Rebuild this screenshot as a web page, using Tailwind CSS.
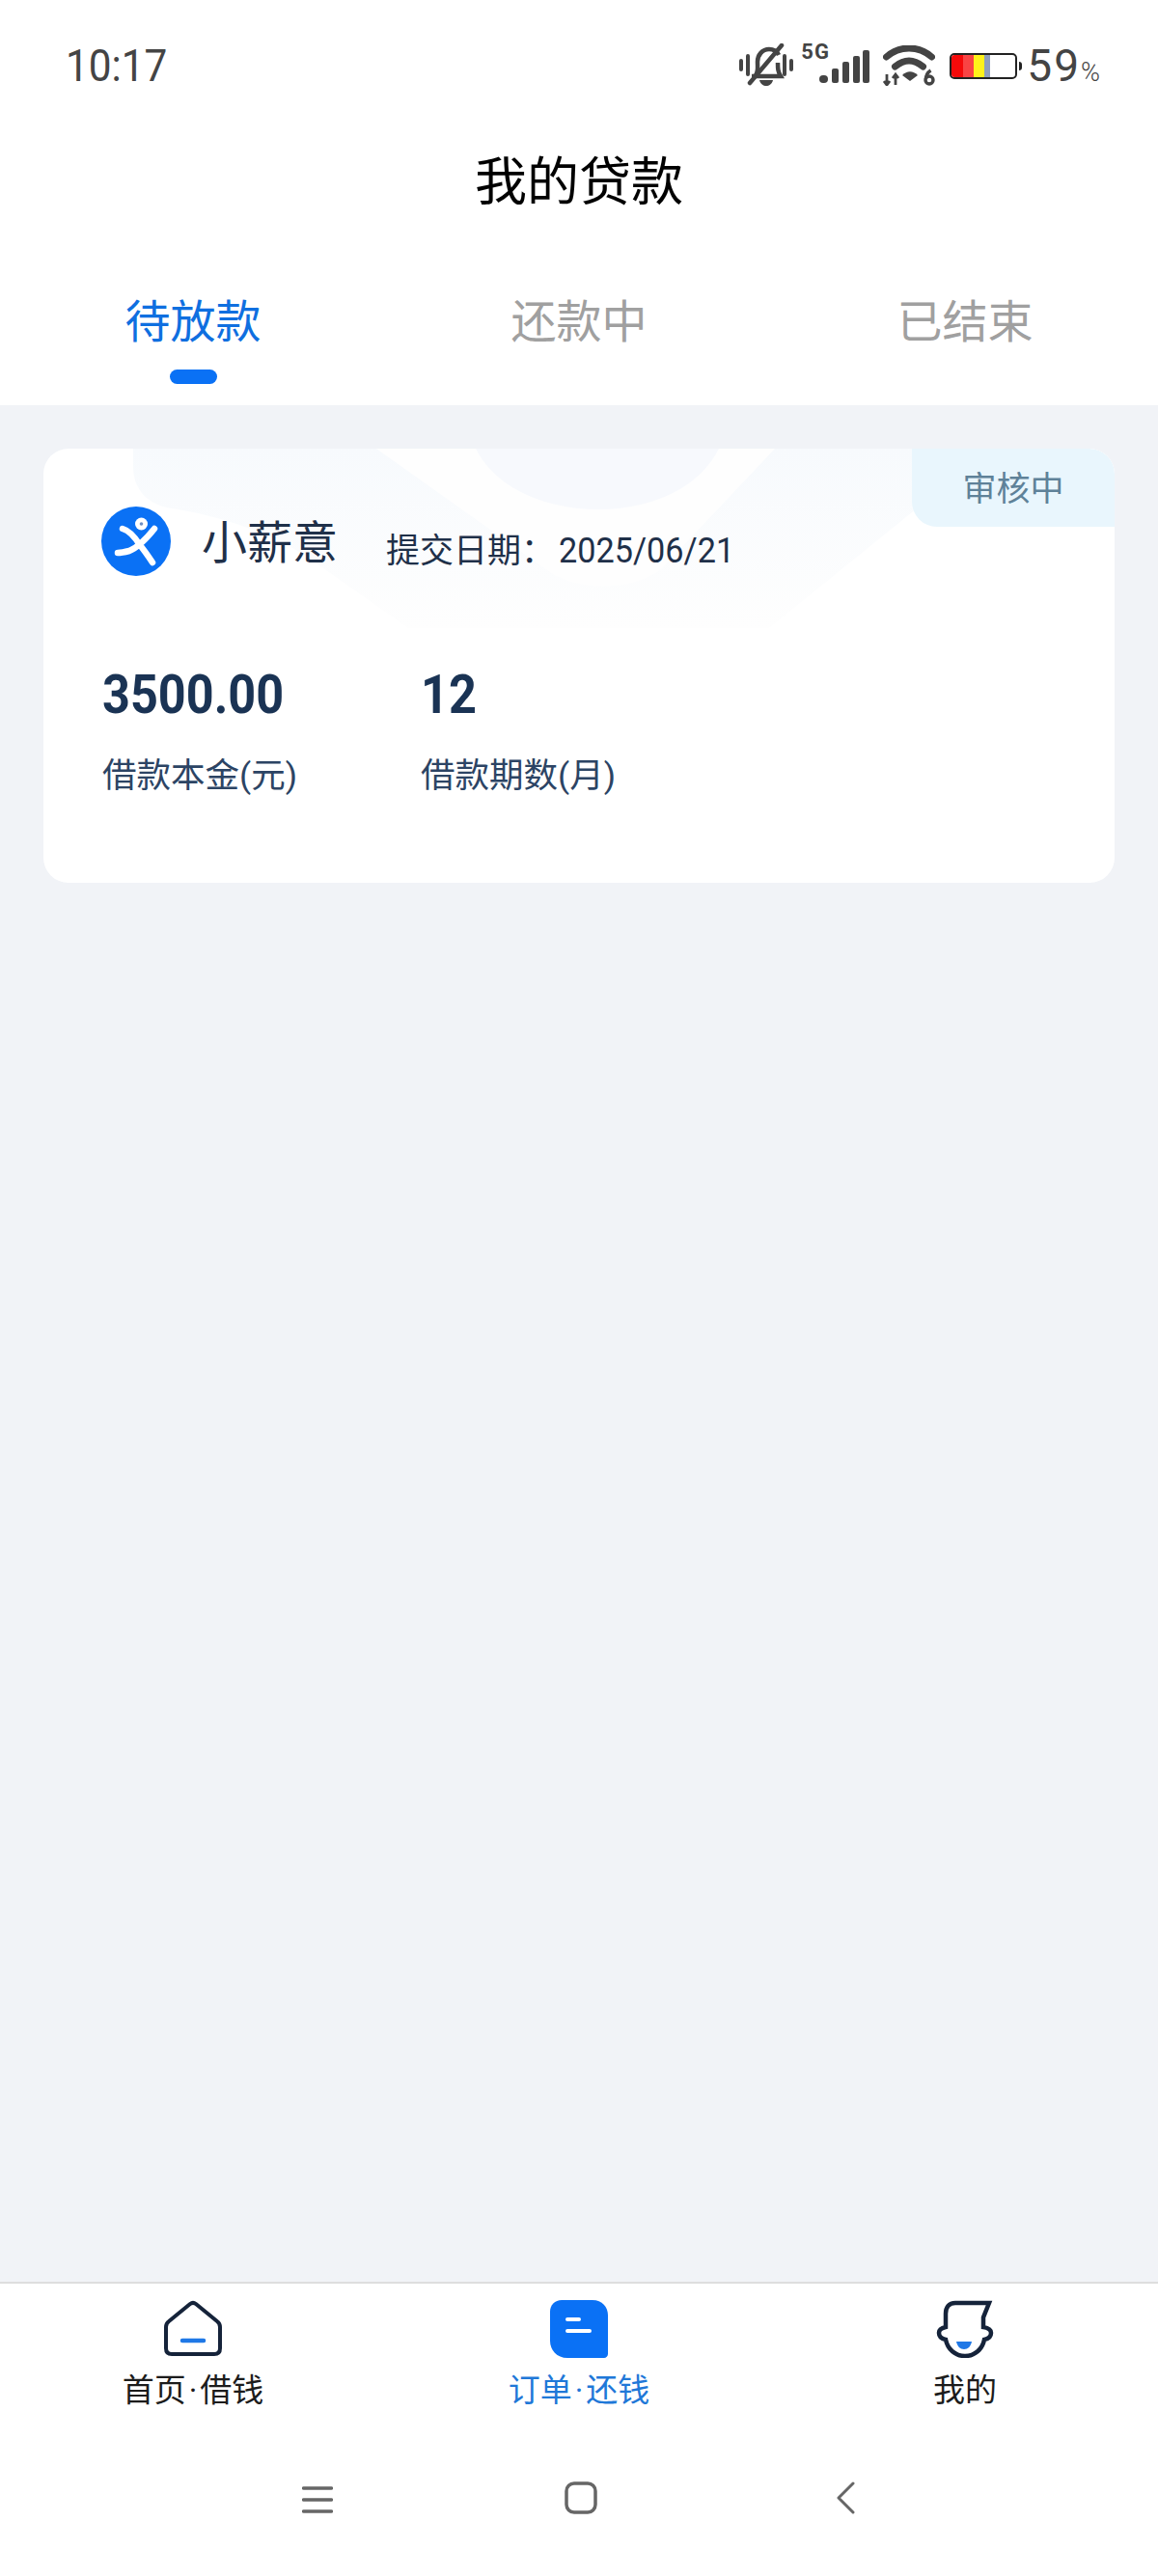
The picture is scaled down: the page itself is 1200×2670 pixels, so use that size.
<!DOCTYPE html>
<html lang="zh"><head><meta charset="utf-8"><script src="https://cdn.jsdelivr.net/npm/@tailwindcss/browser@4"></script></head>
<body class="m-0">
<div class="flex h-[2670px] w-[1200px] flex-col overflow-hidden bg-[#f1f3f7] font-['Roboto','Noto_Sans_CJK_SC',sans-serif]">
  <header class="h-[420px] shrink-0 bg-white">
    <div class="flex h-[136px] items-center justify-between pl-[68px] pr-[60px]">
      <span class="origin-left scale-x-[.92] text-[46px] leading-none text-[#444]">10:17</span>
      <div class="flex items-center">
        <svg width="56" height="46" viewBox="0 0 56 46" class="mr-[8px]" fill="none" stroke="#444">
          <path d="M2 18v9M9 13v19M47 13v19M54 18v9" stroke-width="4" stroke-linecap="round"/>
          <path d="M17 33c3-4 2-8 2-14 0-7 5-13 12-13 5 0 8 2 10 6M40 20c0 6 0 9 3 14H13" stroke-width="4.5"/>
          <path d="M11 41 L44 2" stroke-width="4.5" stroke-linecap="round"/>
          <path d="M21 38h14c-1 4-4 6-7 6s-6-2-7-6z" fill="#444" stroke="none"/>
        </svg>
        <div class="relative mr-[14px] h-[44px] w-[71px]">
          <span class="absolute left-0 top-[-3px] text-[22px] font-bold leading-[22px] tracking-[1px] text-[#444]">5G</span>
          <svg width="52" height="34" viewBox="0 0 52 34" class="absolute bottom-[4px] right-0" fill="#444">
            <rect x="0" y="26" width="9" height="8" rx="4"/><rect x="13" y="19" width="7" height="15" rx="2"/><rect x="24" y="12" width="7" height="22" rx="2"/><rect x="35" y="6" width="7" height="28" rx="2"/><rect x="45" y="0" width="7" height="34" rx="2"/>
          </svg>
        </div>
        <svg width="54" height="42" viewBox="0 0 54 42" class="mr-[15px]" fill="none">
          <path d="M3.500 12C17 0 37 0 50.500 12M12.500 22c10-8 19-8 29 0" stroke="#444" stroke-width="7" stroke-linecap="round"/>
          <path d="M20 31c5-5 11-5 16 0l-8 6z" fill="#444"/>
          <path d="M4 30v11M1 37l3 4 3-4M13 41V30M10 34l3-4 3 4" stroke="#444" stroke-width="2.800"/>
          <circle cx="48" cy="36" r="4" stroke="#444" stroke-width="3.400"/><path d="M44.500 35c0-5 2-7 5-9" stroke="#444" stroke-width="3.400"/>
        </svg>
        <div class="relative mr-[2px] flex h-[27px] w-[70px] overflow-hidden rounded-[5px] border-2 border-[#222] bg-white">
          <div class="w-[12px] bg-[#f50a0a]"></div><div class="w-[11px] bg-[#f94444]"></div><div class="w-[11px] bg-[#fff21a]"></div><div class="w-[6px] bg-[#8f9fbd]"></div>
        </div>
        <div class="mr-[5px] h-[9px] w-[3px] rounded-r-sm bg-[#222]"></div>
        <span class="text-[46px] leading-none tracking-[2px] text-[#444]">59</span><span class="mt-[14px] text-[27px] font-light leading-none text-[#444]">%</span>
      </div>
    </div>
    <h1 class="h-[102px] pt-[3px] text-center text-[54px] font-normal leading-[102px] text-black">我的贷款</h1>
    <nav class="grid grid-cols-3 pt-[68px]">
      <div class="flex flex-col items-center"><span class="text-[47px] leading-[56px] text-[#0f6fe0]">待放款</span><span class="mt-[21px] h-[15px] w-[49px] rounded-full bg-[#0a71f5]"></span></div>
      <div class="text-center text-[47px] leading-[56px] text-[#a0a0a0]">还款中</div>
      <div class="text-center text-[47px] leading-[56px] text-[#a0a0a0]">已结束</div>
    </nav>
  </header>

  <main class="flex-1 px-[45px] pt-[45px]">
    <section class="relative h-[450px] overflow-hidden rounded-[26px] bg-white">
      <svg class="absolute left-0 top-0" width="1110" height="220" viewBox="0 0 1110 220" fill="none">
        <defs><linearGradient id="g" x1="0" y1="0" x2="0" y2="1"><stop offset="0" stop-color="#f7fafd"/><stop offset="1" stop-color="#fefefe"/></linearGradient></defs>
        <path d="M93 0v18c0 25 15 40 40 44 50 8 110 25 160 64l85 60h374L905 62c30-20 70-45 100-62z" fill="url(#g)"/>
        <path d="M345 0 525 128c30 20 85 20 115-3L758 0z" fill="#fefefe"/>
        <path d="M448 0c20 40 70 63 127 63s105-23 125-63z" fill="#f7f9fd"/>
      </svg>
      <div class="absolute right-0 top-0 flex h-[81px] w-[210px] items-center justify-center rounded-bl-[26px] rounded-tr-[26px] bg-[#e9f6fd] pt-[4px] text-[35px] leading-none text-[#5f8299]">审核中</div>
      <div class="relative flex h-[132px] items-center pl-[60px] pt-[62px]">
        <svg width="72" height="72" viewBox="0 0 72 72" class="mt-[-2px]">
          <circle cx="36" cy="36" r="36" fill="#0a71f5"/>
          <circle cx="41.500" cy="18" r="6.500" fill="#fff"/><circle cx="41.500" cy="18" r="1.800" fill="#6d8fc4"/>
          <path d="M22 23c7 2 13 9 18 17 5 6 9 12 13 18M55 23C47 33 39 42 29 46c-4 1-8 2-12 2" fill="none" stroke="#fff" stroke-width="6.500" stroke-linecap="round"/>
        </svg>
        <span class="ml-[32px] text-[47px] leading-none text-[#1f3049]">小薪意</span>
        <span class="ml-[50px] mt-[16px] flex items-baseline text-[35px] leading-none text-[#1f3049]">提交日期：<span class="ml-[4px] inline-block origin-left scale-x-[.925] text-[37px]">2025/06/21</span></span>
      </div>
      <div class="relative flex pl-[61px] pt-[95px]">
        <div class="w-[330px]">
          <div class="origin-left scale-x-[.9] text-[56px] font-bold leading-[56px] text-[#1a3354]">3500.00</div>
          <div class="mt-[34px] text-[35.500px] leading-[44px] text-[#2c4464]">借款本金(元)</div>
        </div>
        <div>
          <div class="origin-left scale-x-[.9] text-[56px] font-bold leading-[56px] text-[#1a3354]">12</div>
          <div class="mt-[34px] text-[35.500px] leading-[44px] text-[#2c4464]">借款期数(月)</div>
        </div>
      </div>
    </section>
  </main>

  <footer class="h-[305px] shrink-0 border-t-2 border-[#dedede] bg-white">
    <div class="grid h-[191px] grid-cols-3 pt-[17px]">
      <div class="flex flex-col items-center">
        <svg width="60" height="60" viewBox="0 0 60 60" fill="none">
          <path d="M27 4 5 22c-2 1.500-3 3.500-3 6v22c0 4 2 6 6 6h44c4 0 6-2 6-6V28c0-2.500-1-4.500-3-6L33 4c-2-1.500-4-1.500-6 0z" stroke="#15233a" stroke-width="4" stroke-linejoin="round"/>
          <path d="M19 42h22" stroke="#1f78e6" stroke-width="4.500" stroke-linecap="round"/>
        </svg>
        <span class="mt-[10px] whitespace-nowrap text-[33px] leading-[48px] text-[#1c1c1c]">首页<span class="mx-[3px]">·</span>借钱</span>
      </div>
      <div class="flex flex-col items-center">
        <svg width="60" height="60" viewBox="0 0 60 60">
          <path d="M12 0h32c10 0 16 7 16 16v40c0 2-2 4-4 4H18C7 60 0 52 0 42V12C0 5 5 0 12 0z" fill="#0a71f5"/>
          <path d="M18 20h12M18 32h23" stroke="#fff" stroke-width="4" stroke-linecap="round"/>
        </svg>
        <span class="mt-[10px] whitespace-nowrap text-[33px] leading-[48px] text-[#1f78d8]">订单<span class="mx-[3px]">·</span>还钱</span>
      </div>
      <div class="flex flex-col items-center">
        <svg width="60" height="60" viewBox="0 0 60 60" fill="none">
          <path d="M55 3H20C13 3 10 8 10 14v14c-5 1-7 3-7 6s2 6 7 7c2 10 10 17 20 17s18-7 20-17c5-1 7-4 7-7s-2-5-8-6V18z" stroke="#15233a" stroke-width="4.500" stroke-linejoin="miter"/>
          <path d="M21 43h16c-1 5-4 8-8 8s-7-3-8-8z" fill="#1f78e6"/>
        </svg>
        <span class="mt-[10px] whitespace-nowrap text-[33px] leading-[48px] text-[#1c1c1c]">我的</span>
      </div>
    </div>
    <div class="flex h-[112px] items-start pl-[313px] pt-[14px]">
      <svg width="32" height="36" viewBox="0 0 32 36" class="mt-[1px]"><path d="M1.500 6h29M1.500 18h29M1.500 30h29" stroke="#666" stroke-width="3.500" stroke-linecap="round"/></svg>
      <svg width="34" height="34" viewBox="0 0 34 34" fill="none" class="ml-[240px]"><rect x="2" y="2" width="30" height="30" rx="8" stroke="#666" stroke-width="3.500"/></svg>
      <svg width="20" height="34" viewBox="0 0 20 34" fill="none" class="ml-[247px]"><path d="M18 2 3 17l15 15" stroke="#666" stroke-width="3" stroke-linecap="round" stroke-linejoin="round"/></svg>
    </div>
  </footer>
</div>
</body></html>
